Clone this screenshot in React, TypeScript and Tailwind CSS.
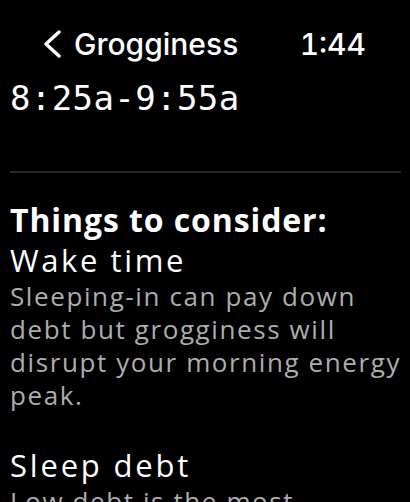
import React from 'react';

const Chevron: React.FC = () => (
  <svg width="20" height="28" viewBox="0 0 20 28" fill="none">
    <path d="M17 2 L4 14 L17 26" stroke="white" strokeWidth="3.4" strokeLinecap="round" strokeLinejoin="round" />
  </svg>
);

export default function App() {
  return (
    <div className="w-[410px] h-[502px] bg-black text-white overflow-hidden">
      {/* status / nav bar */}
      <div className="flex items-center justify-between pl-[42px] pr-[44px] pt-[26px] h-[62px] font-['Inter',sans-serif]">
        <div className="flex items-center gap-[12px]">
          <Chevron />
          <span className="text-[30px] leading-[36px] font-medium">Grogginess</span>
        </div>
        <span className="text-[30px] leading-[36px] font-medium tabular-nums">1:44</span>
      </div>

      <div className="pl-[10px]">
        <div className="mt-[15px] font-['DejaVu_Sans_Mono',monospace] text-[34px] leading-[42px] tracking-[0.4px]">
          8:25a-9:55a
        </div>

        <div className="mt-[52px] mr-[9px] h-[2px] bg-[#26262b]" />

        <div className="mt-[27px] font-['Open_Sans',sans-serif]">
          <h2 className="text-[32px] leading-[40px] font-bold tracking-[0.9px]">Things to consider:</h2>
          <h3 className="text-[31px] leading-[40px] font-normal tracking-[2.6px]">Wake time</h3>
          <p className="text-[26px] leading-[33px] text-[#adadad] font-normal tracking-[1.6px]">
            Sleeping-in can pay down debt but grogginess will disrupt your morning energy peak.
          </p>

          <h3 className="mt-[33px] text-[31px] leading-[40px] font-normal tracking-[2.8px]">Sleep debt</h3>
          <p className="text-[26px] leading-[33px] text-[#adadad] font-normal tracking-[1.6px]">
            Low debt is the most important factor for energy.
          </p>
        </div>
      </div>
    </div>
  );
}
